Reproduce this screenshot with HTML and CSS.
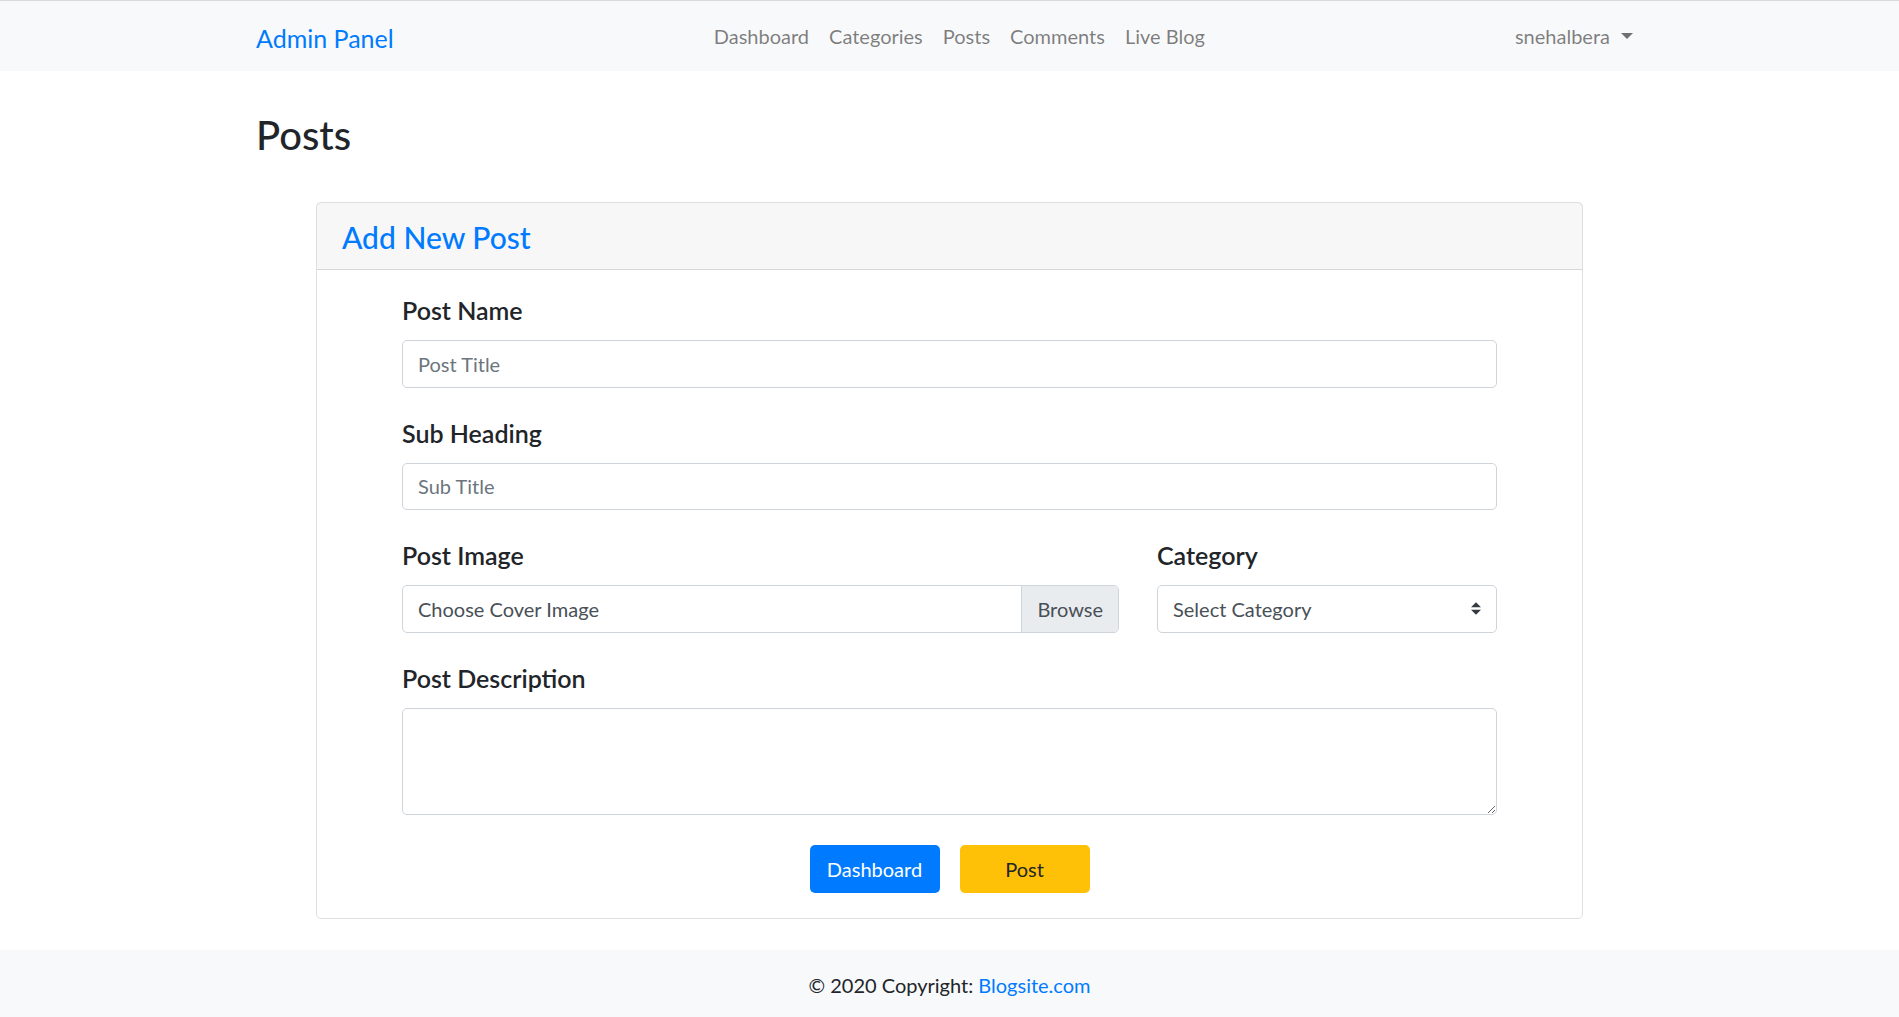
FILE: index.html
```html
<!DOCTYPE html>
<html lang="en">
<head>
<meta charset="utf-8">
<title>Admin Panel - Posts</title>
<link rel="stylesheet" href="styles.css">
</head>
<body>
<nav class="navbar">
  <div class="nav-inner">
    <a class="brand" href="#">Admin Panel</a>
    <ul class="nav-links">
      <li><a href="#">Dashboard</a></li>
      <li><a href="#">Categories</a></li>
      <li><a href="#">Posts</a></li>
      <li><a href="#">Comments</a></li>
      <li><a href="#">Live Blog</a></li>
    </ul>
    <a class="user" href="#">snehalbera<span class="caret"></span></a>
  </div>
</nav>

<main class="page">
  <h2 class="page-title">Posts</h2>
  <section class="card">
    <div class="card-header">
      <h4 class="card-title">Add New Post</h4>
    </div>
    <div class="card-body">
      <form class="post-form">
        <div class="group">
          <label class="lbl">Post Name</label>
          <input class="ctl" type="text" placeholder="Post Title">
        </div>
        <div class="group">
          <label class="lbl">Sub Heading</label>
          <input class="ctl" type="text" placeholder="Sub Title">
        </div>
        <div class="group row2">
          <div>
            <label class="lbl">Post Image</label>
            <div class="file ctl">
              <span class="file-text">Choose Cover Image</span>
              <span class="browse">Browse</span>
            </div>
          </div>
          <div>
            <label class="lbl">Category</label>
            <div class="select ctl">
              <span>Select Category</span>
              <svg class="sel-arrow" width="10" height="13" viewBox="0 0 4 5"><path fill="#343a40" d="M2 0L0 2h4zm0 5L0 3h4z"/></svg>
            </div>
          </div>
        </div>
        <div class="group last">
          <label class="lbl">Post Description</label>
          <textarea class="ctl area" rows="3"></textarea>
        </div>
        <div class="actions">
          <button type="button" class="btn btn-blue">Dashboard</button>
          <button type="button" class="btn btn-yellow">Post</button>
        </div>
      </form>
    </div>
  </section>
</main>

<footer class="footer">
  © 2020 Copyright: <a href="#">Blogsite.com</a>
</footer>
</body>
</html>
```

FILE: styles.css
```css
* { box-sizing: border-box; }

html, body {
  margin: 0;
  padding: 0;
}

body {
  font-family: Lato, "Noto Sans", "Open Sans", sans-serif;
  color: #212529;
  background: #fff;
  border-top: 1px solid #d9dadc;
  font-size: 20px;
  line-height: 1.5;
}

a { text-decoration: none; }

.navbar {
  background: #f8f9fa;
  height: 70px;
}

.nav-inner {
  width: 1387px;
  margin: 0 auto;
  height: 100%;
  display: flex;
  align-items: center;
}

.brand {
  color: #007bff;
  font-size: 25px;
  line-height: 37.5px;
  padding-top: 5px;
  margin-right: 20px;
}

.nav-links {
  list-style: none;
  margin: 0 auto;
  padding: 0;
  display: flex;
}

.nav-links a, .user {
  display: block;
  padding: 0 10px;
  color: rgba(0, 0, 0, 0.5);
  font-size: 20px;
  line-height: 30px;
}

.user {
  display: flex;
  align-items: center;
  padding-right: 10px;
}

.caret {
  display: inline-block;
  margin-left: 11px;
  border-top: 6px solid rgba(0, 0, 0, 0.55);
  border-left: 6px solid transparent;
  border-right: 6px solid transparent;
}

.page {
  width: 1387px;
  margin: 0 auto;
  padding-top: 40px;
}

.page-title {
  margin: 0 0 43px;
  font-size: 40px;
  line-height: 48px;
  font-weight: 500;
}

.card {
  margin: 0 60px 31px;
  border: 1px solid rgba(0, 0, 0, 0.125);
  border-radius: 5px;
}

.card-header {
  background: rgba(0, 0, 0, 0.03);
  border-bottom: 1px solid rgba(0, 0, 0, 0.125);
  padding: 16px 25px 14px;
}

.card-title {
  margin: 0;
  color: #007bff;
  font-size: 30px;
  line-height: 36px;
  font-weight: 500;
}

.card-body {
  padding: 25px 85px;
}

.group {
  margin-bottom: 30px;
}

.group.last {
  margin-bottom: 30px;
}

.lbl {
  display: block;
  font-size: 25px;
  line-height: 30px;
  font-weight: 600;
  margin-bottom: 15px;
  color: #212529;
}

.ctl {
  display: block;
  width: 100%;
  height: 47.5px;
  padding: 0 15px;
  font-family: inherit;
  font-size: 20px;
  color: #495057;
  background: #fff;
  border: 1px solid #ced4da;
  border-radius: 5px;
  outline: none;
}

.ctl::placeholder {
  color: #6c757d;
}

.row2 {
  display: grid;
  grid-template-columns: 717px 1fr;
  column-gap: 38px;
}

.file {
  display: flex;
  align-items: stretch;
  padding: 0;
  overflow: hidden;
}

.file-text {
  flex: 1;
  display: flex;
  align-items: center;
  padding: 0 15px;
}

.browse {
  display: flex;
  align-items: center;
  padding: 0 15px;
  background: #e9ecef;
  border-left: 1px solid #ced4da;
}

.select {
  display: flex;
  align-items: center;
  justify-content: space-between;
}

.area {
  height: 107.5px;
  padding: 7.5px 15px;
  resize: vertical;
}

.actions {
  display: flex;
  justify-content: center;
  gap: 20px;
}

.btn {
  width: 130px;
  height: 48px;
  border: 1px solid transparent;
  border-radius: 5px;
  font-family: inherit;
  font-size: 20px;
  cursor: pointer;
}

.btn-blue {
  background: #007bff;
  color: #fff;
}

.btn-yellow {
  background: #ffc107;
  color: #212529;
}

.footer {
  background: #f8f9fa;
  text-align: center;
  padding: 20px;
  line-height: 30px;
  font-size: 20px;
}

.footer a {
  color: #007bff;
}
```
